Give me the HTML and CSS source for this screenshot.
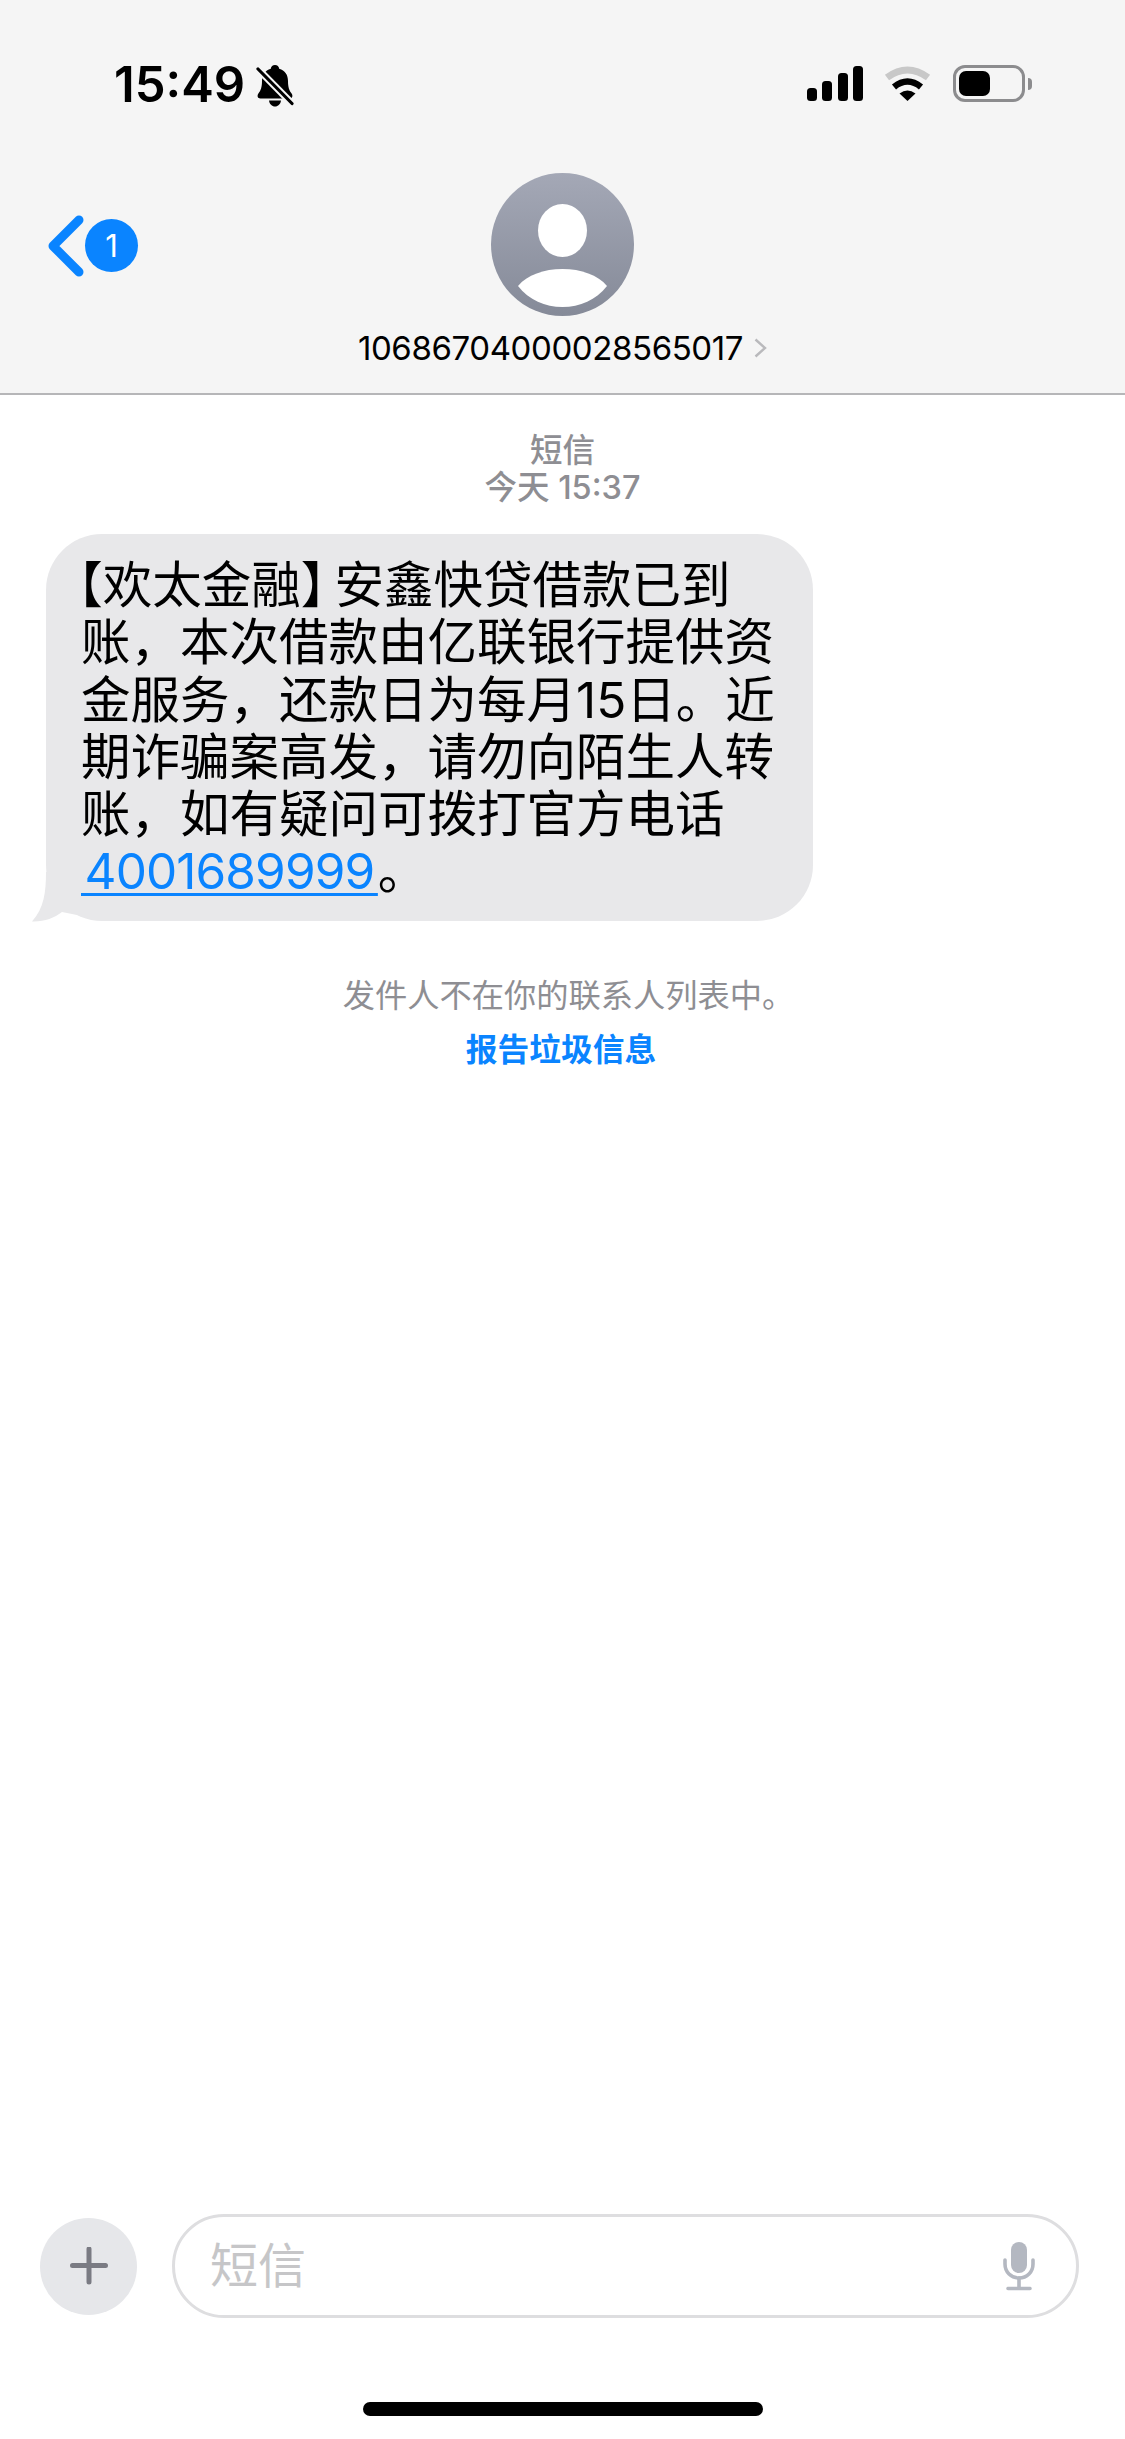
FILE: index.html
```html
<!DOCTYPE html>
<html lang="zh-CN">
<head>
<meta charset="utf-8">
<title>短信</title>
<link rel="stylesheet" href="styles.css">
</head>
<body>
<div class="screen">
  <header class="header">
    <div class="status">
      <div class="status-left">
        <span class="time">15:49</span>
        <svg class="bell" viewBox="0 0 38 42" width="38" height="42">
          <path d="M19 0c2.400 0 4 1.700 4.200 3.800C29 5.300 32 10 32 16c0 6 1.200 9.500 3.600 12.500 1.500 2 1 5-2 5H4.400c-3 0-3.500-3-2-5C4.800 25.500 6 22 6 16 6 10 9 5.300 14.800 3.800 15 1.700 16.600 0 19 0z" fill="#000"/>
          <path d="M13 35.500h12c-.4 3.500-3 6-6 6s-5.600-2.500-6-6z" fill="#000"/>
          <path d="M2 4 L36 38.500" stroke="#f5f5f5" stroke-width="7" fill="none"/>
          <path d="M2 4 L36 38.500" stroke="#000" stroke-width="3.200" stroke-linecap="round" fill="none"/>
        </svg>
      </div>
      <div class="status-right">
        <div class="signal">
          <span class="bar b1"></span><span class="bar b2"></span><span class="bar b3"></span><span class="bar b4"></span>
        </div>
        <svg class="wifi" viewBox="0 0 48 35" width="48" height="35">
          <path d="M3 11.500Q23.500 -3.500 44 11.500" stroke="#c8c8c8" stroke-width="7" fill="none"/>
          <path d="M10 21Q23.500 10 37 21" stroke="#000" stroke-width="6.500" fill="none"/>
          <path d="M15.500 27.500Q23.500 21.500 31.500 27.500L23.500 35Z" fill="#000"/>
        </svg>
        <div class="battery-wrap">
          <div class="battery"><div class="battery-fill"></div></div>
          <div class="battery-cap"></div>
        </div>
      </div>
    </div>
    <div class="nav">
      <div class="back">
        <svg class="chevron" viewBox="0 0 36 62" width="36" height="62">
          <path d="M31 5 L5 31 L31 57" stroke="#0a84ff" stroke-width="9" stroke-linecap="round" stroke-linejoin="round" fill="none"/>
        </svg>
        <span class="badge">1</span>
      </div>
      <div class="contact">
        <svg class="avatar" viewBox="0 0 143 143" width="143" height="143">
          <defs>
            <linearGradient id="avatarFill" x1="0" y1="0" x2="0" y2="1">
              <stop offset="0" stop-color="#a4a8b6"/>
              <stop offset="1" stop-color="#858a98"/>
            </linearGradient>
          </defs>
          <circle cx="71.500" cy="71.500" r="71.500" fill="url(#avatarFill)"/>
          <ellipse cx="71.500" cy="57.500" rx="24.500" ry="26.500" fill="#fff"/>
          <path d="M27 113C36 102 53 96 71.500 96C90 96 107 102 116 113C105 127 89 134 71.500 134C54 134 38 127 27 113Z" fill="#fff"/>
        </svg>
        <div class="number-row">
          <span class="number">10686704000028565017</span>
          <svg class="disclosure" viewBox="0 0 13 20" width="13" height="20">
            <path d="M1.500 1.500 L11 10 L1.500 18.500" stroke="#b9b9bc" stroke-width="2.400" fill="none"/>
          </svg>
        </div>
      </div>
    </div>
  </header>

  <main class="thread">
    <div class="meta">
      <div class="meta-kind">短信</div>
      <div class="meta-time">今天 15:37</div>
    </div>
    <div class="bubble">
      <svg class="tail" viewBox="0 0 50 50" width="50" height="50">
        <path d="M14 0C14 20 12 36 0 49.500C12 50 22 46 30 40L50 44V0Z" fill="#e8e8ea"/>
      </svg>
      <p class="message"><span class="lb">【</span>欢太金融<span class="rb">】</span>安鑫快贷借款已到<br>账，本次借款由亿联银行提供资<br>金服务，还款日为每月15日。近<br>期诈骗案高发，请勿向陌生人转<br>账，如有疑问可拨打官方电话<br><a class="phone">&#8202;4001689999&#8202;</a>。</p>
    </div>
    <div class="notice">
      <div class="notice-text">发件人不在你的联系人列表中。</div>
      <div class="notice-link">报告垃圾信息</div>
    </div>
  </main>

  <footer class="composer">
    <div class="plus">
      <svg viewBox="0 0 38 38" width="38" height="38">
        <path d="M19 2V35M2.500 18.500H35.500" stroke="#7a7b83" stroke-width="5" stroke-linecap="round" fill="none"/>
      </svg>
    </div>
    <div class="input">
      <span class="placeholder">短信</span>
      <svg class="mic" viewBox="0 0 34 50" width="34" height="50">
        <rect x="9" y="1" width="16" height="31" rx="8" fill="#b4b8c1"/>
        <path d="M3 19V23C3 31 9 37 17 37C25 37 31 31 31 23V19" stroke="#b4b8c1" stroke-width="3.600" stroke-linecap="round" fill="none"/>
        <path d="M17 37V46M6 47.500H28" stroke="#b4b8c1" stroke-width="3.600" stroke-linecap="round" fill="none"/>
      </svg>
    </div>
  </footer>
  <div class="home-row"><div class="home-bar"></div></div>
</div>
</body>
</html>
```
FILE: styles.css
```css
* { box-sizing: border-box; }
html, body { margin: 0; padding: 0; }
body {
  width: 1125px;
  height: 2439px;
  background: #fff;
  font-family: Inter, "Noto Sans CJK SC", sans-serif;
  overflow: hidden;
}
.screen {
  width: 1125px;
  height: 2439px;
  display: flex;
  flex-direction: column;
}
.header {
  height: 395px;
  flex: none;
  background: #f5f5f5;
  border-bottom: 2px solid #b6b6b8;
  padding-top: 60px;
}
.status {
  display: flex;
  justify-content: space-between;
  align-items: center;
  height: 50px;
  padding: 0 93px 0 114px;
}
.status-left { display: flex; align-items: center; gap: 11px; }
.time {
  font-size: 49px;
  font-weight: 600;
  line-height: 50px;
  color: #000;
  letter-spacing: 0;
}
.bell { display: block; margin-top: 1px; }
.status-right { display: flex; align-items: center; padding-bottom: 3px; }
.signal { display: flex; align-items: flex-end; gap: 5.500px; height: 35px; }
.bar { width: 10px; background: #000; border-radius: 3.500px; }
.b1 { height: 13px; }
.b2 { height: 20px; }
.b3 { height: 28px; }
.b4 { height: 35px; }
.wifi { display: block; margin-left: 21px; }
.battery-wrap { display: flex; align-items: center; margin-left: 21px; }
.battery {
  width: 72px;
  height: 37px;
  border: 3px solid #8c8c8e;
  border-radius: 12px;
  padding: 3px;
}
.battery-fill { width: 31px; height: 25px; background: #000; border-radius: 7px; }
.battery-cap {
  width: 4px;
  height: 12px;
  margin-left: 3px;
  background: #8c8c8e;
  border-radius: 0 6px 6px 0;
}
.nav {
  display: grid;
  grid-template-columns: 1fr auto 1fr;
  margin-top: 63px;
}
.back {
  display: flex;
  align-items: center;
  align-self: start;
  height: 143px;
  padding-left: 48px;
  padding-top: 2px;
}
.chevron { display: block; }
.badge {
  width: 53px;
  height: 53px;
  margin-left: 1px;
  border-radius: 50%;
  background: #0a84ff;
  color: #fff;
  font-size: 31px;
  line-height: 53px;
  text-align: center;
}
.contact { display: flex; flex-direction: column; align-items: center; }
.avatar { display: block; }
.number-row {
  display: flex;
  align-items: center;
  gap: 11px;
  margin-top: 10px;
  height: 44px;
}
.number {
  font-size: 33px;
  line-height: 44px;
  color: #000;
  letter-spacing: -0.400px;
}
.disclosure { display: block; }
.thread { flex: 1; display: flex; flex-direction: column; }
.meta {
  margin-top: 37px;
  text-align: center;
  color: #8e8e93;
  font-size: 32.500px;
  line-height: 37px;
  font-weight: 500;
}
.bubble {
  position: relative;
  width: 767px;
  height: 387px;
  margin: 28px 0 0 46px;
  background: #e8e8ea;
  border-radius: 56px;
  padding: 23px 0 0 35px;
}
.tail { position: absolute; left: -14px; bottom: -0.500px; display: block; }
.message {
  position: relative;
  margin: 0;
  font-size: 49.500px;
  line-height: 57.250px;
  color: #000;
  white-space: nowrap;
}
.lb { font-feature-settings: "halt"; margin-left: -3px; }
.rb { font-feature-settings: "halt"; margin-right: 9px; }
.phone {
  color: #0a84ff;
  text-decoration: underline;
  text-underline-offset: 4px;
  text-decoration-thickness: 3px;
  letter-spacing: -0.900px;
}
.notice { margin-top: 53px; text-align: center; }
.notice-text { font-size: 32.250px; line-height: 44px; color: #8e8e93; padding-left: 12px; }
.notice-link { font-size: 31.750px; margin-top: 10px; line-height: 44px; color: #0a84ff; font-weight: 600; padding-right: 3px; }
.composer {
  flex: none;
  display: flex;
  align-items: center;
  gap: 35px;
  padding: 0 46px 0 40px;
  height: 104px;
}
.plus {
  width: 97px;
  height: 97px;
  border-radius: 50%;
  background: #e6e7ea;
  display: flex;
  align-items: center;
  justify-content: center;
}
.plus svg { display: block; }
.input {
  flex: 1;
  height: 104px;
  border: 3px solid #dedee0;
  border-radius: 52px;
  display: flex;
  align-items: center;
  justify-content: space-between;
  padding: 0 40px 0 35px;
}
.placeholder { font-size: 48px; line-height: 60px; color: #c6c6c8; }
.mic { display: block; }
.home-row {
  flex: none;
  height: 121px;
  padding-top: 84px;
  display: flex;
  justify-content: center;
}
.home-bar { width: 400px; height: 14px; background: #000; border-radius: 7px; }
```
